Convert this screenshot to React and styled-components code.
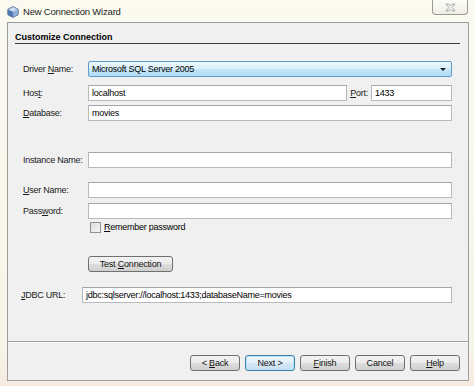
import React from 'react'
import styled, { createGlobalStyle, css } from 'styled-components'

const GlobalStyle = createGlobalStyle`
  html, body {
    margin: 0;
    padding: 0;
    background: #f9f8ee;
  }
  body {
    font-family: "Liberation Sans", Arial, sans-serif;
    font-size: 9px;
    color: #000;
  }
`

const Window = styled.div`
  width: 474px;
  height: 386px;
  display: flex;
  flex-direction: column;
  background: linear-gradient(#fbfaf1, #f7f5e8 90%, #f6eadf);
  overflow: hidden;
`

const TitleBar = styled.div`
  height: 22px;
  display: flex;
  align-items: flex-start;
  padding-left: 7px;
  padding-right: 6px;
`

const TitleIcon = styled.svg`
  width: 12px;
  height: 12px;
  margin-top: 6px;
  margin-right: 4px;
`

const Title = styled.div`
  margin-top: 6px;
  font-size: 9.5px;
  letter-spacing: -0.2px;
  line-height: 12px;
  color: #1e1e1e;
`

const CloseButton = styled.div`
  margin-left: auto;
  width: 34px;
  height: 14px;
  border: 1px solid #9a9a90;
  border-top: none;
  border-radius: 0 0 4px 4px;
  background: linear-gradient(#fdfdf8, #efeee6);
  display: flex;
  align-items: center;
  justify-content: center;
`

const Client = styled.div`
  margin: 0 5px 0 7px;
  height: 357px;
  border: 1px solid #9c9c9c;
  background: #f0f0f0;
  display: flex;
  flex-direction: column;
`

const Header = styled.div`
  margin: 8px 8px 0 7px;
  height: 12px;
  line-height: 12px;
  font-weight: bold;
  font-size: 9px;
  border-bottom: 1px solid #3a3a3a;
`

const Row = styled.div`
  display: flex;
  align-items: center;
  height: 16px;
  margin-top: ${p => p.$top}px;
  padding-left: ${p => p.$indent ?? 15}px;
  padding-right: 16px;
`

const Label = styled.div`
  width: ${p => p.$width ?? 65}px;
  flex: none;
  font-size: 9px;
  letter-spacing: -0.25px;
  color: #1a1a1a;
  white-space: nowrap;
`

const InlineLabel = styled(Label)`
  width: auto;
  margin: 0 3px 0 3px;
`

const Field = styled.div`
  flex: ${p => (p.$width ? 'none' : 1)};
  width: ${p => (p.$width ? `${p.$width}px` : 'auto')};
  height: 100%;
  box-sizing: border-box;
  border: 1px solid #b8b9bd;
  border-top-color: #a3a5aa;
  background: #fff;
  padding-left: 3px;
  display: flex;
  align-items: center;
  font-size: 9px;
  letter-spacing: -0.25px;
  white-space: nowrap;
  overflow: hidden;
`

const Select = styled.div`
  flex: 1;
  height: 100%;
  box-sizing: border-box;
  border: 1px solid #5a9ccb;
  border-radius: 2px;
  background: linear-gradient(#ecf7fd 0%, #dcf0fb 45%, #c2e4f7 55%, #b3ddf5 100%);
  padding-left: 3px;
  padding-right: 5px;
  display: flex;
  align-items: center;
  justify-content: space-between;
  font-size: 9px;
  letter-spacing: -0.25px;
`

const Arrow = styled.span`
  width: 0;
  height: 0;
  border-left: 3px solid transparent;
  border-right: 3px solid transparent;
  border-top: 3px solid #1a1a1a;
`

const CheckRow = styled.div`
  display: flex;
  align-items: center;
  height: 12px;
  margin-top: 2px;
  padding-left: 82px;
  gap: 3px;
  font-size: 9px;
  letter-spacing: -0.25px;
`

const Checkbox = styled.span`
  width: 9px;
  height: 9px;
  border: 1px solid #8e8f8f;
  background: linear-gradient(135deg, #dcdcdc, #f6f6f6);
`

const Button = styled.div`
  width: ${p => p.$width ?? 50}px;
  height: 16px;
  box-sizing: border-box;
  border: 1px solid #707070;
  border-radius: 3px;
  background: linear-gradient(#f2f2f2 0%, #ebebeb 50%, #dddddd 51%, #cfcfcf 100%);
  display: flex;
  align-items: center;
  justify-content: center;
  font-size: 9px;
  letter-spacing: -0.2px;
  color: #111;
  white-space: pre;
  ${p =>
    p.$default &&
    css`
      border-color: #3c7fb1;
      background: linear-gradient(#eef6fb 0%, #e3eff8 50%, #d4e6f3 51%, #c8def0 100%);
      box-shadow: inset 0 0 0 1px #bfe4f9;
    `}
`

const TestRow = styled.div`
  margin-top: 23px;
  padding-left: 80px;
  display: flex;
`

const Separator = styled.div`
  margin-top: auto;
  border-top: 1px solid #a0a0a0;
  border-bottom: 1px solid #ffffff;
`

const ButtonBar = styled.div`
  display: flex;
  justify-content: flex-end;
  gap: 5px;
  padding: 12px 8px 9px 0;
`

const Cube = () => (
  <TitleIcon viewBox="0 0 12 12">
    <path d="M6 0.6 L11.2 3.3 L11.2 8.7 L6 11.4 L0.8 8.7 L0.8 3.3 Z" fill="#6f8fb8" stroke="#4b5f7c" strokeWidth="0.8" />
    <path d="M6 0.9 L10.9 3.4 L6 5.9 L1.1 3.4 Z" fill="#c9def3" />
    <path d="M1.1 3.6 L5.8 6.1 L5.8 11 L1.1 8.6 Z" fill="#4f79b3" />
    <path d="M6.2 6.1 L10.9 3.6 L10.9 8.6 L6.2 11 Z" fill="#8fb1d9" />
  </TitleIcon>
)

const CloseGlyph = () => (
  <svg width="11" height="9" viewBox="0 0 11 9">
    <path
      d="M1 1 L3.5 1 L5.5 3 L7.5 1 L10 1 L7 4.5 L10 8 L7.5 8 L5.5 6 L3.5 8 L1 8 L4 4.5 Z"
      fill="#fafafa"
      stroke="#8d8d8d"
      strokeWidth="0.8"
    />
  </svg>
)

export default function App() {
  return (
    <>
      <GlobalStyle />
      <Window>
        <TitleBar>
          <Cube />
          <Title>New Connection Wizard</Title>
          <CloseButton>
            <CloseGlyph />
          </CloseButton>
        </TitleBar>
        <Client>
          <Header>Customize Connection</Header>

          <Row $top={17}>
            <Label>Driver <u>N</u>ame:</Label>
            <Select>
              <span>Microsoft SQL Server 2005</span>
              <Arrow />
            </Select>
          </Row>
          <Row $top={8}>
            <Label>Hos<u>t</u>:</Label>
            <Field>localhost</Field>
            <InlineLabel><u>P</u>ort:</InlineLabel>
            <Field $width={81}>1433</Field>
          </Row>
          <Row $top={4}>
            <Label><u>D</u>atabase:</Label>
            <Field>movies</Field>
          </Row>

          <Row $top={31}>
            <Label>Instance Name:</Label>
            <Field />
          </Row>
          <Row $top={14}>
            <Label><u>U</u>ser Name:</Label>
            <Field />
          </Row>
          <Row $top={5}>
            <Label>Pass<u>w</u>ord:</Label>
            <Field />
          </Row>
          <CheckRow>
            <Checkbox />
            <span><u>R</u>emember password</span>
          </CheckRow>

          <TestRow>
            <Button $width={85}><span>Test <u>C</u>onnection</span></Button>
          </TestRow>

          <Row $top={15} $indent={13}>
            <Label $width={61}><u>J</u>DBC URL:</Label>
            <Field>jdbc:sqlserver://localhost:1433;databaseName=movies</Field>
          </Row>

          <Separator />
          <ButtonBar>
            <Button><span>&lt; <u>B</u>ack</span></Button>
            <Button $default><span>Next &gt;</span></Button>
            <Button><span><u>F</u>inish</span></Button>
            <Button><span>Cancel</span></Button>
            <Button><span><u>H</u>elp</span></Button>
          </ButtonBar>
        </Client>
      </Window>
    </>
  )
}
